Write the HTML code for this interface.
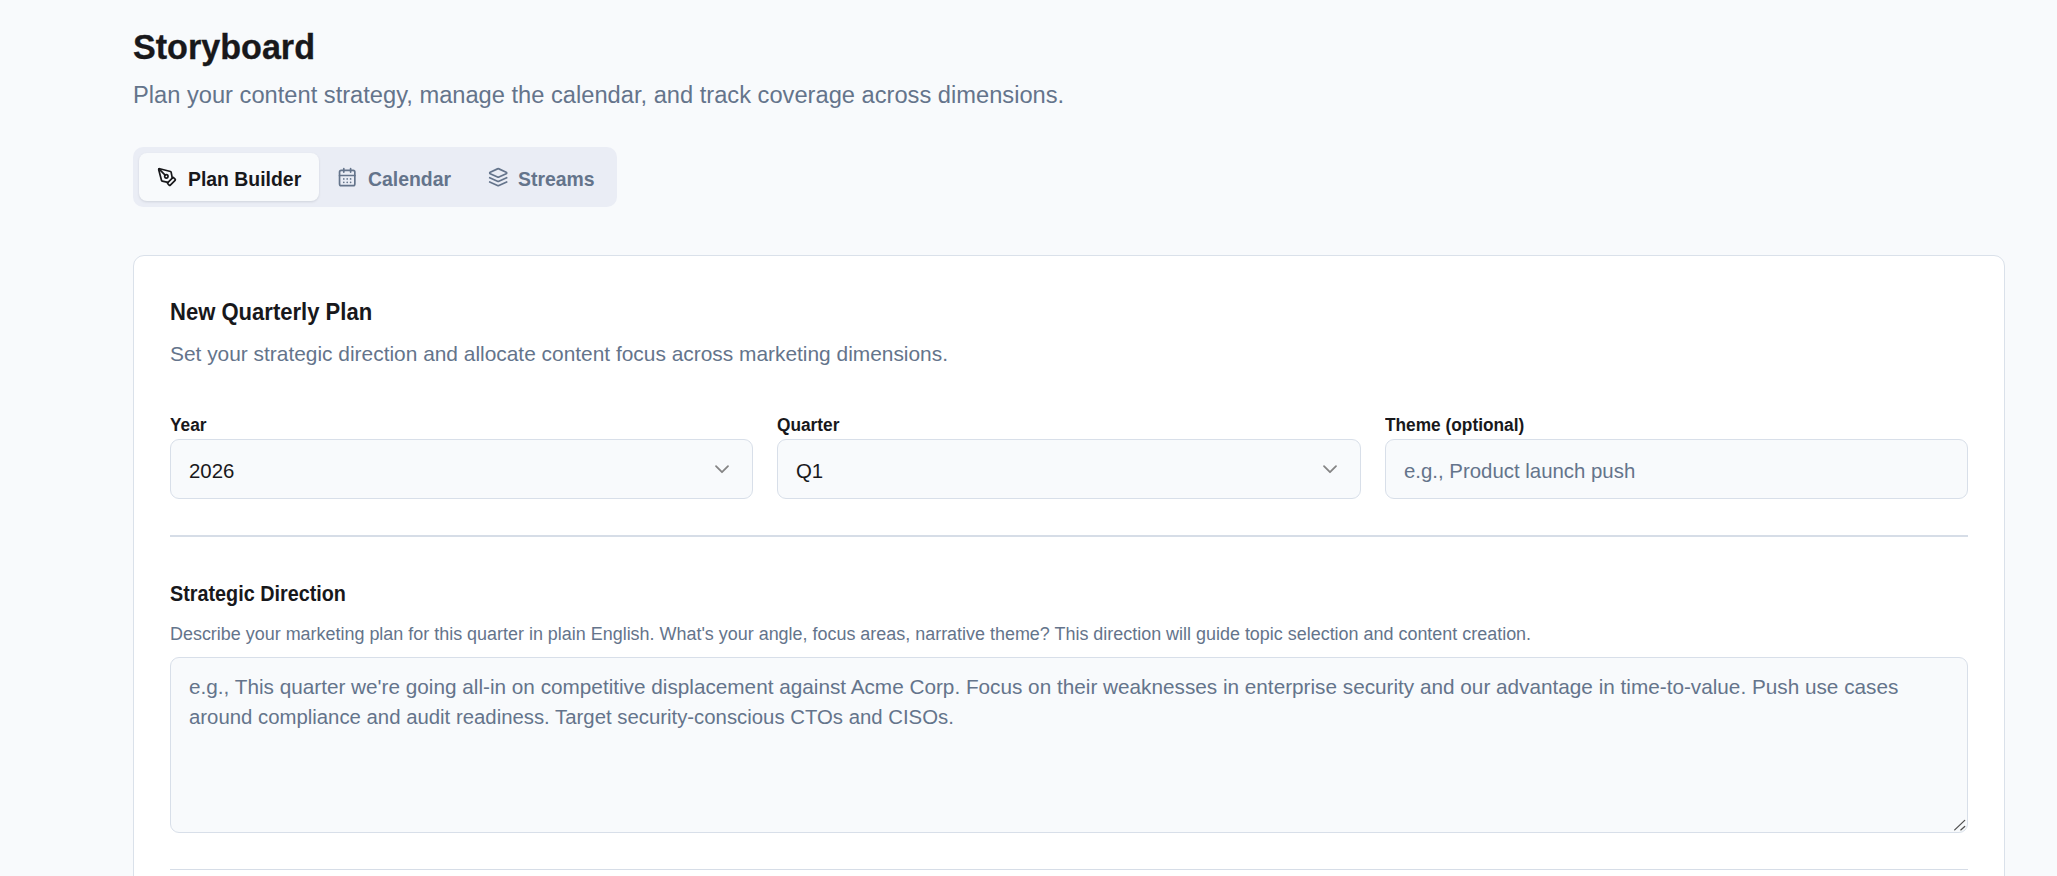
<!DOCTYPE html>
<html>
<head>
<meta charset="utf-8">
<style>
html,body{margin:0;padding:0;}
body{width:2057px;height:876px;overflow:hidden;background:#f8fafc;position:relative;font-family:"Liberation Sans",sans-serif;}
.a{position:absolute;white-space:nowrap;line-height:1.2;}
.b{font-weight:700;}
#tabs{position:absolute;left:133px;top:147px;width:484px;height:60px;background:#eaedf5;border-radius:10px;}
#tabon{position:absolute;left:139px;top:153px;width:180px;height:48px;background:#f8fafc;border-radius:8px;box-shadow:0 1px 3px rgba(15,23,42,0.08),0 1px 2px rgba(15,23,42,0.04);}
svg.ic{position:absolute;fill:none;stroke-width:2;stroke-linecap:round;stroke-linejoin:round;}
#card{position:absolute;left:133px;top:255px;width:1870px;height:700px;background:#fff;border:1px solid #dae1ea;border-radius:11px;}
.sel{position:absolute;top:439px;height:58px;background:#f8fafc;border:1px solid #d8dfe9;border-radius:9px;}
.hr{position:absolute;left:170px;width:1798px;height:2px;background:#d6dde7;}
#ta{position:absolute;left:170px;top:657px;width:1796px;height:174px;background:#f8fafc;border:1px solid #d8dfe9;border-radius:9px;}
</style>
</head>
<body>
<div class="a b" id="title" style="left:133px;top:26.22px;font-size:35.8px;color:#18181b;transform:scaleX(0.9530);transform-origin:0 0;-webkit-text-stroke:0.35px #18181b;">Storyboard</div>
<div class="a" id="sub" style="left:133px;top:80.59px;font-size:23.68px;color:#64748b;">Plan your content strategy, manage the calendar, and track coverage across dimensions.</div>
<div id="tabs"></div>
<div id="tabon"></div>
<svg class="ic" style="left:157.3px;top:167px;stroke:#18181b" width="20.4" height="20.4" viewBox="0 0 24 24"><path d="M15.707 21.293a1 1 0 0 1-1.414 0l-1.586-1.586a1 1 0 0 1 0-1.414l5.586-5.586a1 1 0 0 1 1.414 0l1.586 1.586a1 1 0 0 1 0 1.414z"/><path d="m18 13-1.375-6.874a1 1 0 0 0-.746-.776L3.235 2.028a1 1 0 0 0-1.207 1.207L5.35 15.879a1 1 0 0 0 .776.746L13 18"/><path d="m2.3 2.3 7.286 7.286"/><circle cx="11" cy="11" r="2"/></svg>
<svg class="ic" style="left:337.4px;top:167.4px;stroke:#64748b" width="20.4" height="20.4" viewBox="0 0 24 24"><path d="M8 2v4"/><path d="M16 2v4"/><rect width="18" height="18" x="3" y="4" rx="2"/><path d="M3 10h18"/><path d="M8 14h.01"/><path d="M12 14h.01"/><path d="M16 14h.01"/><path d="M8 18h.01"/><path d="M12 18h.01"/><path d="M16 18h.01"/></svg>
<svg class="ic" style="left:488.3px;top:167.3px;stroke:#64748b" width="20.4" height="20.4" viewBox="0 0 24 24"><path d="m12.83 2.18a2 2 0 0 0-1.66 0L2.6 6.08a1 1 0 0 0 0 1.83l8.58 3.91a2 2 0 0 0 1.66 0l8.58-3.9a1 1 0 0 0 0-1.83Z"/><path d="m22 17.65-9.17 4.16a2 2 0 0 1-1.66 0L2 17.65"/><path d="m22 12.65-9.17 4.16a2 2 0 0 1-1.66 0L2 12.65"/></svg>
<div class="a b" id="t1" style="left:188px;top:165.92px;font-size:21.0px;color:#18181b;transform:scaleX(0.9238);transform-origin:0 0;">Plan Builder</div>
<div class="a b" id="t2" style="left:368px;top:165.92px;font-size:21.0px;color:#64748b;transform:scaleX(0.9238);transform-origin:0 0;">Calendar</div>
<div class="a b" id="t3" style="left:518px;top:165.92px;font-size:21.0px;color:#64748b;transform:scaleX(0.9238);transform-origin:0 0;">Streams</div>
<div id="card"></div>
<div class="a b" id="h2" style="left:170px;top:297.71px;font-size:23.6px;color:#18181b;transform:scaleX(0.9343);transform-origin:0 0;">New Quarterly Plan</div>
<div class="a" id="p2" style="left:170px;top:340.82px;font-size:20.9px;color:#64748b;">Set your strategic direction and allocate content focus across marketing dimensions.</div>
<div class="a b" id="l1" style="left:170px;top:414.28px;font-size:18.3px;color:#18181b;transform:scaleX(0.9454);transform-origin:0 0;">Year</div>
<div class="a b" id="l2" style="left:777px;top:414.28px;font-size:18.3px;color:#18181b;transform:scaleX(0.9454);transform-origin:0 0;">Quarter</div>
<div class="a b" id="l3" style="left:1385px;top:414.28px;font-size:18.3px;color:#18181b;transform:scaleX(0.9454);transform-origin:0 0;">Theme (optional)</div>
<div class="sel" style="left:170px;width:581px"></div>
<div class="sel" style="left:777px;width:582px"></div>
<div class="sel" style="left:1385px;width:581px"></div>
<div class="a" id="v1" style="left:189px;top:458.59px;font-size:20.4px;color:#18181b;">2026</div>
<div class="a" id="v2" style="left:796px;top:458.59px;font-size:20.4px;color:#18181b;">Q1</div>
<div class="a" id="v3" style="left:1404px;top:458.59px;font-size:20.4px;color:#64748b;">e.g., Product launch push</div>
<svg class="ic" style="left:713px;top:462.6px;stroke:#858585" width="18" height="12" viewBox="0 0 18 12"><path d="M3 3.2L9 9.2L15 3.2" stroke-width="1.8"/></svg>
<svg class="ic" style="left:1321px;top:462.6px;stroke:#858585" width="18" height="12" viewBox="0 0 18 12"><path d="M3 3.2L9 9.2L15 3.2" stroke-width="1.8"/></svg>
<div class="hr" style="top:535px"></div>
<div class="a b" id="h3" style="left:170px;top:580.73px;font-size:21.2px;color:#18181b;transform:scaleX(0.9340);transform-origin:0 0;">Strategic Direction</div>
<div class="a" id="p3" style="left:170px;top:623.81px;font-size:17.95px;color:#64748b;">Describe your marketing plan for this quarter in plain English. What's your angle, focus areas, narrative theme? This direction will guide topic selection and content creation.</div>
<div id="ta"></div>
<div class="a" id="tl1" style="left:189px;top:674.97px;font-size:20.74px;color:#64748b;">e.g., This quarter we're going all-in on competitive displacement against Acme Corp. Focus on their weaknesses in enterprise security and our advantage in time-to-value. Push use cases</div>
<div class="a" id="tl2" style="left:189px;top:705.24px;font-size:20.35px;color:#64748b;">around compliance and audit readiness. Target security-conscious CTOs and CISOs.</div>
<svg style="position:absolute;left:1952px;top:818px" width="16" height="14" viewBox="0 0 16 14"><path d="M2.7 11.9L12.7 2.4M8.8 11.9L12.7 8.5" stroke="#505050" stroke-width="1.3" stroke-linecap="round"/></svg>
<div class="hr" style="top:869px;height:1px"></div>
</body>
</html>
